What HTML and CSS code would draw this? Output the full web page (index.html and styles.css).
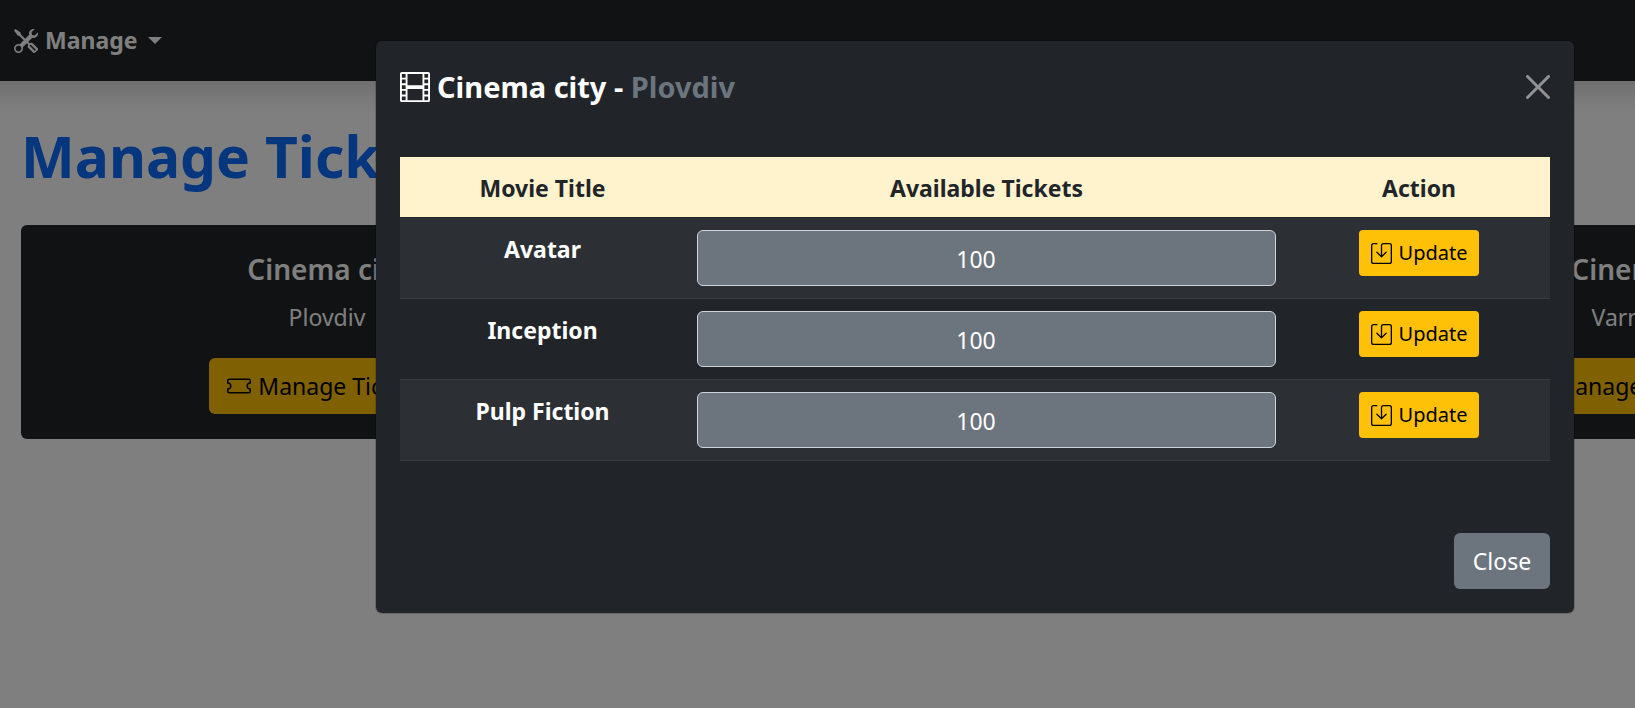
FILE: index.html
```html
<!DOCTYPE html>
<html lang="en">
<head>
<meta charset="utf-8">
<title>Manage Tickets</title>
<link rel="stylesheet" href="styles.css">
</head>
<body>
<svg width="0" height="0" class="sprite" aria-hidden="true">
  <symbol id="tools" viewBox="0 0 16 16"><path d="M1 0 0 1l2.2 3.081a1 1 0 0 0 .815.419h.07a1 1 0 0 1 .708.293l2.675 2.675-2.617 2.654A3.003 3.003 0 0 0 0 13a3 3 0 1 0 5.878-.851l2.654-2.617.968.968-.305.914a1 1 0 0 0 .242 1.023l3.27 3.27a.997.997 0 0 0 1.414 0l1.586-1.586a.997.997 0 0 0 0-1.414l-3.27-3.27a1 1 0 0 0-1.023-.242L10.5 9.5l-.96-.96 2.68-2.643A3.005 3.005 0 0 0 16 3q0-.405-.102-.777l-2.14 2.141L12 4l-.364-1.757L13.777.102a3 3 0 0 0-3.675 3.68L7.462 6.46 4.793 3.793a1 1 0 0 1-.293-.707v-.071a1 1 0 0 0-.419-.814zm9.646 10.646a.5.5 0 0 1 .708 0l2.914 2.915a.5.5 0 0 1-.707.707l-2.915-2.914a.5.5 0 0 1 0-.708M3 11l.471.242.529.026.287.445.445.287.026.529L5 13l-.242.471-.026.529-.445.287-.287.445-.529.026L3 15l-.471-.242L2 14.732l-.287-.445L1.268 14l-.026-.529L1 13l.242-.471.026-.529.445-.287.287-.445.529-.026z"/></symbol>
  <symbol id="ticket" viewBox="0 0 16 16"><path d="M0 4.5A1.5 1.5 0 0 1 1.5 3h13A1.5 1.5 0 0 1 16 4.5V6a.5.5 0 0 1-.5.5 1.5 1.5 0 0 0 0 3 .5.5 0 0 1 .5.5v1.5a1.5 1.5 0 0 1-1.5 1.5h-13A1.5 1.5 0 0 1 0 11.5V10a.5.5 0 0 1 .5-.5 1.5 1.5 0 1 0 0-3A.5.5 0 0 1 0 6zM1.5 4a.5.5 0 0 0-.5.5v1.05a2.5 2.5 0 0 1 0 4.9v1.05a.5.5 0 0 0 .5.5h13a.5.5 0 0 0 .5-.5v-1.05a2.5 2.5 0 0 1 0-4.9V4.5a.5.5 0 0 0-.5-.5z"/></symbol>
  <symbol id="film" viewBox="0 0 16 16"><path d="M0 1a1 1 0 0 1 1-1h14a1 1 0 0 1 1 1v14a1 1 0 0 1-1 1H1a1 1 0 0 1-1-1zm4 0v6h8V1zm8 8H4v6h8zM1 1v2h2V1zm2 3H1v2h2zM1 7v2h2V7zm2 3H1v2h2zm-2 3v2h2v-2zM15 1h-2v2h2zm-2 3v2h2V4zm2 3h-2v2h2zm-2 3v2h2v-2zm2 3h-2v2h2z"/></symbol>
  <symbol id="save" viewBox="0 0 16 16"><path d="M2 1a1 1 0 0 0-1 1v12a1 1 0 0 0 1 1h12a1 1 0 0 0 1-1V2a1 1 0 0 0-1-1H9.500a1 1 0 0 0-1 1v7.293l2.646-2.647a.5.5 0 0 1 .708.708l-3.500 3.500a.5.5 0 0 1-.708 0l-3.500-3.500a.5.5 0 1 1 .708-.708L7.500 9.293V2a2 2 0 0 1 2-2H14a2 2 0 0 1 2 2v12a2 2 0 0 1-2 2H2a2 2 0 0 1-2-2V2a2 2 0 0 1 2-2h2.500a.5.5 0 0 1 0 1z"/></symbol>
  <symbol id="close" viewBox="0 0 16 16"><path d="M.293.293a1 1 0 0 1 1.414 0L8 6.586 14.293.293a1 1 0 1 1 1.414 1.414L9.414 8l6.293 6.293a1 1 0 0 1-1.414 1.414L8 9.414l-6.293 6.293a1 1 0 0 1-1.414-1.414L6.586 8 .293 1.707a1 1 0 0 1 0-1.414"/></symbol>
</svg>

<div class="page">
  <nav class="navbar">
    <button class="nav-toggle" type="button"><svg class="icon"><use href="#tools"/></svg>Manage<span class="caret"></span></button>
  </nav>
  <main class="content">
    <h1 class="page-title">Manage Tickets</h1>
    <div class="cards">
      <section class="card">
        <h2 class="card-title">Cinema city</h2>
        <p class="card-text">Plovdiv</p>
        <button class="btn btn-warning" type="button"><svg class="icon"><use href="#ticket"/></svg>Manage Tickets</button>
      </section>
      <section class="card card-last">
        <h2 class="card-title">Cinema</h2>
        <p class="card-text">Varna</p>
        <button class="btn btn-warning" type="button"><svg class="icon"><use href="#ticket"/></svg>Manage Tickets</button>
      </section>
    </div>
  </main>

  <div class="backdrop">
    <div class="modal" role="dialog" aria-labelledby="modal-title">
      <header class="modal-header">
        <h2 class="modal-title" id="modal-title"><svg class="icon icon-film"><use href="#film"/></svg><span>Cinema city - <span class="city">Plovdiv</span></span></h2>
        <button class="close-x" type="button" aria-label="Close"><svg class="icon"><use href="#close"/></svg></button>
      </header>
      <div class="modal-body">
        <table class="table">
          <colgroup><col class="col-title"><col class="col-tickets"><col class="col-action"></colgroup>
          <thead>
            <tr><th scope="col">Movie Title</th><th scope="col">Available Tickets</th><th scope="col">Action</th></tr>
          </thead>
          <tbody>
            <tr>
              <th scope="row" id="m1">Avatar</th>
              <td><input class="field" type="number" value="100" aria-labelledby="m1"></td>
              <td><button class="btn btn-warning btn-small" type="button"><svg class="icon icon-save"><use href="#save"/></svg>Update</button></td>
            </tr>
            <tr>
              <th scope="row" id="m2">Inception</th>
              <td><input class="field" type="number" value="100" aria-labelledby="m2"></td>
              <td><button class="btn btn-warning btn-small" type="button"><svg class="icon icon-save"><use href="#save"/></svg>Update</button></td>
            </tr>
            <tr>
              <th scope="row" id="m3">Pulp Fiction</th>
              <td><input class="field" type="number" value="100" aria-labelledby="m3"></td>
              <td><button class="btn btn-warning btn-small" type="button"><svg class="icon icon-save"><use href="#save"/></svg>Update</button></td>
            </tr>
          </tbody>
        </table>
      </div>
      <footer class="modal-footer">
        <button class="btn btn-secondary" type="button">Close</button>
      </footer>
    </div>
  </div>
</div>
</body>
</html>
```
FILE: styles.css
```css
* { box-sizing: border-box; }

html { height: 100%; }

body {
  height: 100%;
  margin: 0;
  overflow: hidden;
  background: #fff;
  color: #212529;
  font-family: "Segoe UI", "Noto Sans", sans-serif;
  font-size: 23px;
  line-height: 36px;
}

h1, h2, p { margin: 0; }

button, input { font: inherit; }

.sprite { position: absolute; }

.page {
  position: relative;
  min-width: 1950px;
  min-height: 100%;
}

.icon {
  flex: none;
  width: 24px;
  height: 24px;
  fill: currentColor;
}

/* Navigation */
.navbar {
  display: flex;
  margin: 0 -36px;
  padding: 12px 36px;
  background: #212529;
  box-shadow: 0 12px 24px rgba(0, 0, 0, .15);
}

.nav-toggle {
  display: flex;
  align-items: center;
  gap: 7px;
  padding: 10px 14px;
  border: 0;
  background: none;
  color: #fff;
  font-weight: 700;
  line-height: 37px;
}

.caret {
  margin-left: 4px;
  border: 7px solid transparent;
  border-top-color: currentColor;
  border-bottom: 0;
}

/* Cinema cards */
.content { padding: 39px 21px; }

.page-title {
  color: #0d6efd;
  font-size: 57px;
  font-weight: 700;
  line-height: 72px;
}

.cards {
  display: grid;
  grid-template-columns: repeat(3, 1fr);
  gap: 36px;
  margin-top: 33px;
}

.card {
  display: flex;
  flex-direction: column;
  align-items: center;
  padding: 26px 24px 25px;
  border-radius: 6px;
  background: #212529;
  color: #fff;
}

.card-last { grid-column: 3; }

.card-title {
  margin-bottom: 12px;
  font-size: 28px;
  font-weight: 600;
  line-height: 36px;
}

.card-text { margin-bottom: 23px; }

.btn {
  display: inline-flex;
  align-items: center;
  justify-content: center;
  gap: 7px;
  padding: 10px 18px;
  border: 0;
  border-radius: 6px;
}

.btn-warning { background: #ffc107; color: #000; }

.btn-secondary {
  min-width: 96px;
  background: #6c757d;
  color: #fff;
}

.btn-small {
  padding: 8px 12px;
  border-radius: 4px;
  font-size: 20px;
  line-height: 30px;
}

/* Modal */
.backdrop {
  position: absolute;
  inset: 0;
  display: flex;
  align-items: flex-start;
  justify-content: center;
  padding-top: 40px;
  background: rgba(0, 0, 0, .5);
}

.modal {
  width: 1200px;
  border: 1px solid rgba(0, 0, 0, .175);
  border-radius: 7px;
  background: #212529;
  background-clip: padding-box;
  color: #fff;
}

.modal-header {
  display: flex;
  align-items: center;
  justify-content: space-between;
  padding: 23px 24px;
}

.modal-title {
  display: flex;
  align-items: center;
  gap: 7px;
  font-size: 29px;
  font-weight: 700;
  line-height: 46px;
}

.city { color: #6c757d; }

.icon-film { width: 30px; height: 30px; }

.icon-save { width: 21px; height: 21px; }

.close-x {
  display: flex;
  padding: 0;
  border: 0;
  background: none;
  color: #fff;
  opacity: .5;
}

.modal-body { padding: 24px; }

.table {
  width: 100%;
  border-collapse: separate;
  border-spacing: 0;
  table-layout: fixed;
}

.col-title { width: 285px; }

.col-action { width: 262px; }

.table th, .table td {
  padding: 12px;
  border-bottom: 1px solid #373b3e;
  font-size: 23px;
  text-align: center;
  vertical-align: top;
}

.table th {
  padding-top: 13px;
  padding-bottom: 11px;
}

.table thead th {
  border-color: #212529;
  background: #fff3cd;
  background-clip: padding-box;
  color: #212529;
}

.table tbody tr:nth-child(odd) { background: #2c3034; }

.table tbody td { line-height: 0; }

.field {
  width: 100%;
  padding: 10px 24px 8px 18px;
  border: 1px solid #ced4da;
  border-radius: 6px;
  background: #6c757d;
  color: #fff;
  line-height: 36px;
  text-align: center;
}

.modal-footer {
  display: flex;
  justify-content: flex-end;
  padding: 48px 24px 24px;
}
```
